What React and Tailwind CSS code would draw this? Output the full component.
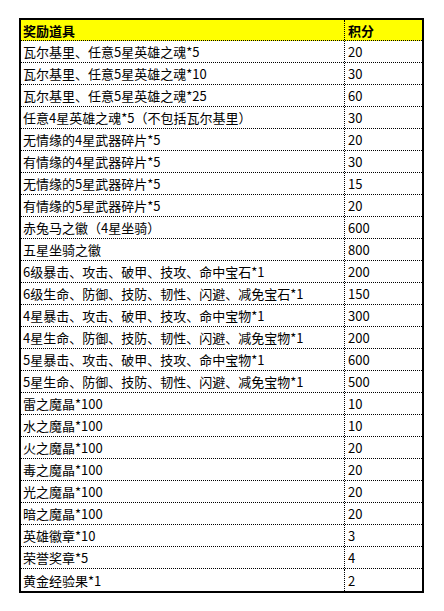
import React from "react";

const rows = [
  ["瓦尔基里、任意5星英雄之魂*5", "20"],
  ["瓦尔基里、任意5星英雄之魂*10", "30"],
  ["瓦尔基里、任意5星英雄之魂*25", "60"],
  ["任意4星英雄之魂*5（不包括瓦尔基里）", "30"],
  ["无情缘的4星武器碎片*5", "20"],
  ["有情缘的4星武器碎片*5", "30"],
  ["无情缘的5星武器碎片*5", "15"],
  ["有情缘的5星武器碎片*5", "20"],
  ["赤兔马之�texts", "600"],
  ["五星坐骑之徽", "800"],
  ["6级暴击、攻击、破甲、技攻、命中宝石*1", "200"],
  ["6级生命、防御、技防、韧性、闪避、减免宝石*1", "150"],
  ["4星暴击、攻击、破甲、技攻、命中宝物*1", "300"],
  ["4星生命、防御、技防、韧性、闪避、减免宝物*1", "200"],
  ["5星暴击、攻击、破甲、技攻、命中宝物*1", "600"],
  ["5星生命、防御、技防、韧性、闪避、减免宝物*1", "500"],
  ["雷之魔晶*100", "10"],
  ["水之魔晶*100", "10"],
  ["火之魔晶*100", "20"],
  ["毒之魔晶*100", "20"],
  ["光之魔晶*100", "20"],
  ["暗之魔晶*100", "20"],
  ["英雄徽章*10", "3"],
  ["荣誉奖章*5", "4"],
  ["黄金经验果*1", "2"],
];
rows[8][0] = "赤兔马之徽（4星坐骑）";

export default function App() {
  return (
    <div
      className="w-[444px] h-[611px] bg-white pt-[18px] pl-[19px] text-[13px] text-black"
      style={{ fontFamily: '"Noto Sans CJK SC", "Noto Sans", sans-serif' }}
    >
      <div className="w-[405px] border-2 border-black">
        <div className="grid grid-cols-[324px_1fr] h-[21px] bg-[#ffff00] border-b border-dotted border-black font-bold">
          <div className="flex items-center pl-[2px] border-r border-dotted border-black leading-none">奖励道具</div>
          <div className="flex items-center pl-[3px] leading-none">积分</div>
        </div>
        {rows.map(([name, pts], i) => (
          <div
            key={i}
            className={
              "grid grid-cols-[324px_1fr] h-[22px] " +
              (i < rows.length - 1 ? "border-b border-dotted border-black" : "")
            }
          >
            <div className="flex items-center pl-[2px] border-r border-dotted border-black leading-none whitespace-nowrap">
              {name}
            </div>
            <div className="flex items-center pl-[3px] leading-none">{pts}</div>
          </div>
        ))}
      </div>
    </div>
  );
}
